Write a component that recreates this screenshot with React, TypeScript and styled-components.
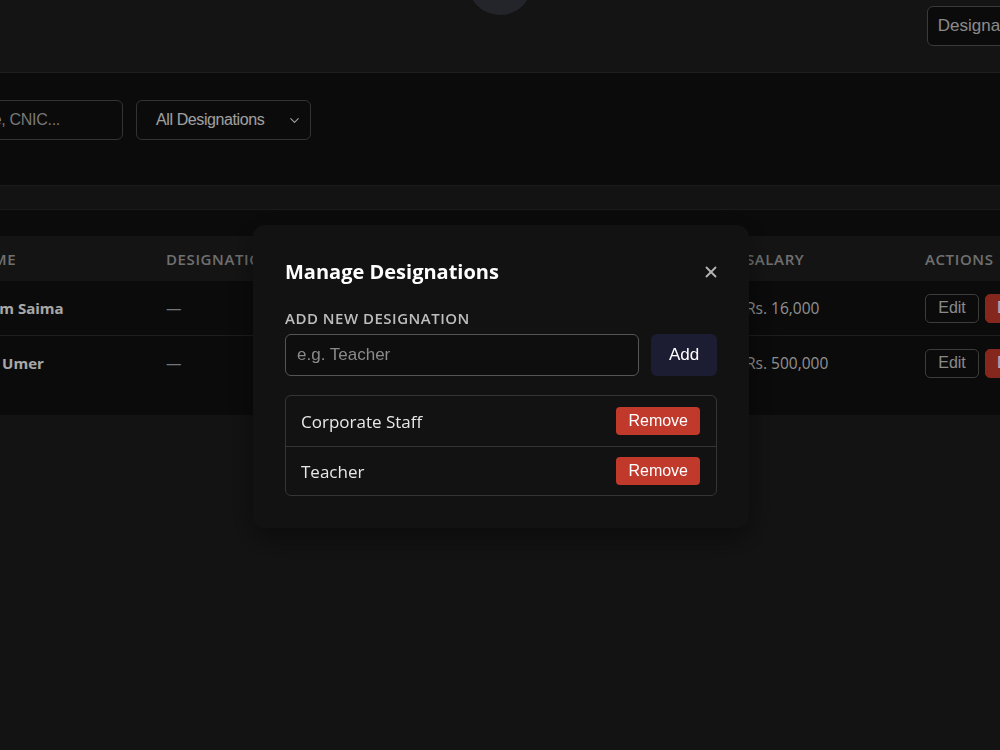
import React from 'react';
import styled, { createGlobalStyle } from 'styled-components';
import { ChevronDown, X } from 'lucide-react';

const GlobalStyle = createGlobalStyle`
  html, body {
    margin: 0;
    padding: 0;
    background: #1c1c1c;
    overflow: hidden;
    font-family: "Open Sans", "Noto Sans", sans-serif;
  }
  * { box-sizing: border-box; }
`;

const staff = [
  { id: 1, name: 'Anam Saima', designation: '', cnic: '35202-1234567-1', phone: '0300-1234567', salary: 'Rs. 16,000' },
  { id: 2, name: 'Asif Umer', designation: '', cnic: '35202-7654321-3', phone: '0321-7654321', salary: 'Rs. 500,000' },
];

const designations = ['Corporate Staff', 'Teacher'];

const App = () => {
  return (
    <>
      <GlobalStyle />
      <Page>
        <TopBar>
          <span />
          <Logo />
          <TopActions>
            <GhostButton>Designations</GhostButton>
          </TopActions>
        </TopBar>
        <Main>
          <FilterCard>
            <SearchInput placeholder="Search by name, CNIC..." />
            <SelectBox>
              All Designations
              <ChevronDown size={15} strokeWidth={1.8} />
            </SelectBox>
          </FilterCard>
          <Spacer />
          <TableCard>
            <HeadRow>
              <HeadCell>#</HeadCell>
              <HeadCell>Name</HeadCell>
              <HeadCell>Designation</HeadCell>
              <HeadCell>CNIC</HeadCell>
              <HeadCell>Phone</HeadCell>
              <HeadCell>Salary</HeadCell>
              <HeadCell>Actions</HeadCell>
            </HeadRow>
            {staff.map((s, i) => (
              <BodyRow key={s.id} $last={i === staff.length - 1}>
                <Cell>{s.id}</Cell>
                <NameCell>{s.name}</NameCell>
                <MutedCell>{s.designation || '—'}</MutedCell>
                <Cell>{s.cnic}</Cell>
                <Cell>{s.phone}</Cell>
                <Cell>{s.salary}</Cell>
                <ActionCell>
                  <EditButton>Edit</EditButton>
                  <DangerButton>Delete</DangerButton>
                </ActionCell>
              </BodyRow>
            ))}
          </TableCard>
        </Main>
      </Page>

      <Overlay>
        <Modal>
          <ModalHeader>
            <ModalTitle>Manage Designations</ModalTitle>
            <CloseButton aria-label="Close">
              <X size={18} strokeWidth={2.4} />
            </CloseButton>
          </ModalHeader>
          <FieldLabel>Add New Designation</FieldLabel>
          <AddRow>
            <TextInput placeholder="e.g. Teacher" />
            <AddButton>Add</AddButton>
          </AddRow>
          <List>
            {designations.map((d) => (
              <ListRow key={d}>
                <ListText>{d}</ListText>
                <RemoveButton>Remove</RemoveButton>
              </ListRow>
            ))}
          </List>
        </Modal>
      </Overlay>
    </>
  );
};

const Page = styled.div`
  width: 1000px;
  min-height: 750px;
  background: #1c1c1c;
`;

const TopBar = styled.header`
  display: grid;
  grid-template-columns: 1fr 64px 1fr;
  align-items: start;
  height: 73px;
  padding-top: 6px;
  background: #1e1e1e;
  border-bottom: 1px solid #2e2e2e;
`;

const Logo = styled.div`
  width: 64px;
  height: 64px;
  margin-top: -55px;
  border-radius: 50%;
  background: #34353d;
`;

const TopActions = styled.div`
  display: flex;
  justify-content: flex-end;
  margin-right: -47px;
`;

const GhostButton = styled.button`
  height: 40px;
  padding: 0 10px;
  background: #111111;
  border: 1px solid #535353;
  border-radius: 6px;
  color: #c6c6c6;
  font-family: "Liberation Sans", Arial, sans-serif;
  font-size: 17px;
  white-space: nowrap;
`;

const Main = styled.main`
  margin: 0 -100px 0 -160px;
`;

const FilterCard = styled.section`
  display: flex;
  gap: 13px;
  height: 113px;
  padding: 27px 0 0 36px;
  background: #101010;
  border-bottom: 1px solid #282828;
`;

const SearchInput = styled.input`
  width: 247px;
  height: 40px;
  padding: 0 12px;
  background: #101010;
  border: 1px solid #494949;
  border-radius: 6px;
  color: #e4e4e4;
  font-family: "Liberation Sans", Arial, sans-serif;
  font-size: 16px;
  letter-spacing: -0.3px;
  outline: none;
  &::placeholder { color: #ababab; }
`;

const SelectBox = styled.div`
  display: flex;
  align-items: center;
  justify-content: space-between;
  width: 175px;
  height: 40px;
  padding: 0 8px 0 19px;
  border: 1px solid #494949;
  border-radius: 6px;
  color: #e4e4e4;
  font-family: "Liberation Sans", Arial, sans-serif;
  font-size: 16px;
  letter-spacing: -0.4px;
  white-space: nowrap;
`;

const Spacer = styled.div`
  height: 23px;
`;

const TableCard = styled.section`
  padding: 26px 0 25px 24px;
  background: #101010;
  border-top: 1px solid #282828;
`;

const columns = '90px 196px 200px 200px 180px 179px 1fr';

const HeadRow = styled.div`
  display: grid;
  grid-template-columns: ${columns};
  align-items: center;
  height: 45px;
  background: #1e1e1e;
`;

const HeadCell = styled.div`
  padding-left: 16px;
  color: #a0a0a0;
  font-size: 15px;
  font-weight: 600;
  letter-spacing: 0.6px;
  text-transform: uppercase;
  white-space: nowrap;
`;

const BodyRow = styled.div<{ $last?: boolean }>`
  display: grid;
  grid-template-columns: ${columns};
  align-items: center;
  height: ${(p) => (p.$last ? '54px' : '55px')};
  border-bottom: ${(p) => (p.$last ? 'none' : '1px solid #2b2b2b')};
`;

const Cell = styled.div`
  padding-left: 16px;
  color: #cecece;
  font-size: 15.5px;
  white-space: nowrap;
`;

const NameCell = styled(Cell)`
  color: #f0f0f0;
  font-size: 15px;
  font-weight: 700;
`;

const MutedCell = styled(Cell)`
  color: #aaaaaa;
`;

const ActionCell = styled(Cell)`
  display: flex;
  gap: 6px;
`;

const EditButton = styled.button`
  height: 29px;
  width: 54px;
  background: transparent;
  border: 1px solid #565656;
  border-radius: 5px;
  color: #c5c5c5;
  font-family: "Liberation Sans", Arial, sans-serif;
  font-size: 16px;
`;

const DangerButton = styled(EditButton)`
  width: 70px;
  background: #c0392b;
  border-color: #c0392b;
  color: #ffffff;
`;

const Overlay = styled.div`
  position: fixed;
  inset: 0;
  display: flex;
  align-items: center;
  justify-content: center;
  padding: 3px 0 0 2px;
  background: rgba(0, 0, 0, 0.3);
`;

const Modal = styled.div`
  width: 496px;
  padding: 33px 32px 32px;
  background: #121212;
  border-radius: 12px;
  box-shadow: 0 10px 30px rgba(0, 0, 0, 0.45);
`;

const ModalHeader = styled.div`
  display: flex;
  align-items: center;
  justify-content: space-between;
  margin-bottom: 22px;
`;

const ModalTitle = styled.h2`
  margin: 0;
  color: #ffffff;
  font-size: 20px;
  font-weight: 700;
  line-height: 28px;
`;

const CloseButton = styled.button`
  display: flex;
  padding: 0;
  margin-right: -3px;
  background: none;
  border: none;
  color: #b5b5b5;
`;

const FieldLabel = styled.div`
  margin-bottom: 5px;
  color: #bdbdbd;
  font-size: 15px;
  font-weight: 600;
  letter-spacing: 0.5px;
  line-height: 21px;
  text-transform: uppercase;
`;

const AddRow = styled.div`
  display: flex;
  gap: 12px;
`;

const TextInput = styled.input`
  flex: 1;
  height: 42px;
  padding: 0 11px;
  background: #0e0e0e;
  border: 1px solid #555555;
  border-radius: 6px;
  color: #eeeeee;
  font-family: "Liberation Sans", Arial, sans-serif;
  font-size: 17px;
  outline: none;
  &::placeholder { color: #8a8a8a; }
`;

const AddButton = styled.button`
  width: 66px;
  height: 42px;
  background: #1c1d33;
  border: none;
  border-radius: 6px;
  color: #ffffff;
  font-family: "Liberation Sans", Arial, sans-serif;
  font-size: 17px;
`;

const List = styled.div`
  margin-top: 19px;
  border: 1px solid #353535;
  border-radius: 6px;
`;

const ListRow = styled.div`
  display: flex;
  align-items: center;
  justify-content: space-between;
  height: 50px;
  padding: 0 16px 0 15px;
  & + & { border-top: 1px solid #353535; height: 49px; }
`;

const ListText = styled.span`
  color: #e8e8e8;
  font-size: 17px;
`;

const RemoveButton = styled.button`
  height: 28px;
  padding: 0 12px;
  background: #c0392b;
  border: none;
  border-radius: 4px;
  color: #ffffff;
  font-family: "Liberation Sans", Arial, sans-serif;
  font-size: 16px;
`;

export default App;
